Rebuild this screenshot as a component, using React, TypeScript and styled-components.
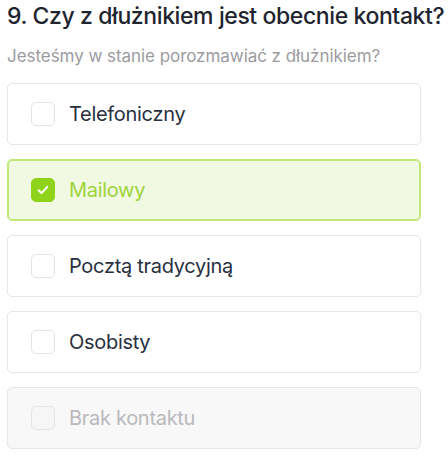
import React, { useState } from "react";
import styled, { createGlobalStyle } from "styled-components";

const GlobalStyle = createGlobalStyle`
	html, body {
		margin: 0;
		padding: 0;
		background: #ffffff;
	}
	body {
		font-family: Inter, "Noto Sans", "Liberation Sans", sans-serif;
	}
`;

interface OptionItem {
	label: string;
	disabled?: boolean;
}

const options: OptionItem[] = [
	{ label: "Telefoniczny" },
	{ label: "Mailowy" },
	{ label: "Pocztą tradycyjną" },
	{ label: "Osobisty" },
	{ label: "Brak kontaktu", disabled: true },
];

const App = () => {
	const [selected, setSelected] = useState<string[]>(["Mailowy"]);

	const toggle = (label: string) => {
		setSelected((prev) =>
			prev.includes(label) ? prev.filter((l) => l !== label) : [...prev, label]
		);
	};

	return (
		<>
			<GlobalStyle />
			<QuestionContainer>
				<QuestionTitle>9. Czy z dłużnikiem jest obecnie kontakt?</QuestionTitle>
				<QuestionHint>Jesteśmy w stanie porozmawiać z dłużnikiem?</QuestionHint>
				<OptionList>
					{options.map((opt) => {
						const checked = selected.includes(opt.label);
						return (
							<OptionCard
								key={opt.label}
								$checked={checked}
								$disabled={!!opt.disabled}
								onClick={() => !opt.disabled && toggle(opt.label)}
							>
								<CheckBox $checked={checked} $disabled={!!opt.disabled}>
									{checked && (
										<svg width="16" height="16" viewBox="0 0 16 16" fill="none">
											<path
												d="M3.6 8.3l2.9 2.8 5.9-6.2"
												stroke="#ffffff"
												strokeWidth="2"
												strokeLinecap="round"
												strokeLinejoin="round"
											/>
										</svg>
									)}
								</CheckBox>
								<OptionLabel $checked={checked} $disabled={!!opt.disabled}>
									{opt.label}
								</OptionLabel>
							</OptionCard>
						);
					})}
				</OptionList>
			</QuestionContainer>
		</>
	);
};

const QuestionContainer = styled.section`
	width: 414px;
	padding: 0 0 0 7px;
	box-sizing: content-box;
	display: flex;
	flex-direction: column;
`;

const QuestionTitle = styled.h2`
	margin: 0;
	padding-top: 2px;
	font-size: 23px;
	font-weight: 500;
	line-height: 28px;
	letter-spacing: -0.4px;
	color: #1f2530;
	white-space: nowrap;
`;

const QuestionHint = styled.p`
	margin: 15px 0 0 0;
	font-size: 17px;
	line-height: 22px;
	letter-spacing: -0.05px;
	color: #9b9b9f;
	white-space: nowrap;
`;

const OptionList = styled.div`
	margin-top: 16px;
	display: flex;
	flex-direction: column;
	gap: 14px;
`;

const OptionCard = styled.div<{ $checked: boolean; $disabled: boolean }>`
	height: 62px;
	box-sizing: border-box;
	display: flex;
	flex-direction: row;
	align-items: center;
	gap: 14px;
	padding-left: 23px;
	border-radius: 5px;
	border: solid 1px
		${(p) => (p.$checked ? "#bfe878" : "#e6e6e8")};
	box-shadow: ${(p) => (p.$checked ? "0 0 0 1px #bfe878 inset" : "none")};
	background-color: ${(p) =>
		p.$checked ? "#f1f9e2" : p.$disabled ? "#f8f8f9" : "#ffffff"};
	cursor: ${(p) => (p.$disabled ? "default" : "pointer")};
`;

const CheckBox = styled.div<{ $checked: boolean; $disabled: boolean }>`
	width: 24px;
	height: 24px;
	box-sizing: border-box;
	border-radius: 5px;
	display: grid;
	place-items: center;
	border: solid 1px ${(p) => (p.$checked ? "#8fd41a" : "#e4e4e7")};
	background-color: ${(p) =>
		p.$checked ? "#8fd41a" : p.$disabled ? "#f6f6f7" : "#ffffff"};
`;

const OptionLabel = styled.span<{ $checked: boolean; $disabled: boolean }>`
	font-size: 20px;
	letter-spacing: -0.3px;
	color: ${(p) =>
		p.$checked ? "#9cd43c" : p.$disabled ? "#b9b9bd" : "#283040"};
`;

export default App;
